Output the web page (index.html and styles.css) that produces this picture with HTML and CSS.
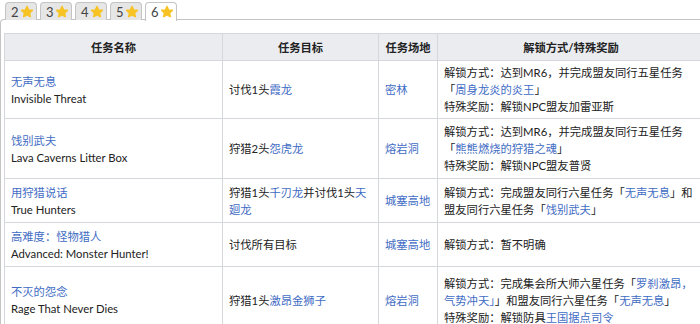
FILE: index.html
```html
<!DOCTYPE html>
<html lang="zh">
<head>
<meta charset="utf-8">
<link rel="stylesheet" href="styles.css">
</head>
<body>
<div class="tabs">
  <span class="tab">2<svg class="star" viewBox="0 0 20 20"><path d="M10 2.2 L12.3 7.1 L17.6 7.7 L13.6 11.3 L14.7 16.6 L10 13.9 L5.3 16.6 L6.4 11.3 L2.4 7.7 L7.7 7.1 Z" fill="#f7c325" stroke="#f7c325" stroke-width="2.2" stroke-linejoin="round"/></svg></span>
  <span class="tab">3<svg class="star" viewBox="0 0 20 20"><path d="M10 2.2 L12.3 7.1 L17.6 7.7 L13.6 11.3 L14.7 16.6 L10 13.9 L5.3 16.6 L6.4 11.3 L2.4 7.7 L7.7 7.1 Z" fill="#f7c325" stroke="#f7c325" stroke-width="2.2" stroke-linejoin="round"/></svg></span>
  <span class="tab">4<svg class="star" viewBox="0 0 20 20"><path d="M10 2.2 L12.3 7.1 L17.6 7.7 L13.6 11.3 L14.7 16.6 L10 13.9 L5.3 16.6 L6.4 11.3 L2.4 7.7 L7.7 7.1 Z" fill="#f7c325" stroke="#f7c325" stroke-width="2.2" stroke-linejoin="round"/></svg></span>
  <span class="tab">5<svg class="star" viewBox="0 0 20 20"><path d="M10 2.2 L12.3 7.1 L17.6 7.7 L13.6 11.3 L14.7 16.6 L10 13.9 L5.3 16.6 L6.4 11.3 L2.4 7.7 L7.7 7.1 Z" fill="#f7c325" stroke="#f7c325" stroke-width="2.2" stroke-linejoin="round"/></svg></span>
  <span class="tab active">6<svg class="star" viewBox="0 0 20 20"><path d="M10 2.2 L12.3 7.1 L17.6 7.7 L13.6 11.3 L14.7 16.6 L10 13.9 L5.3 16.6 L6.4 11.3 L2.4 7.7 L7.7 7.1 Z" fill="#f7c325" stroke="#f7c325" stroke-width="2.2" stroke-linejoin="round"/></svg></span>
</div>
<div class="panel">
  <table class="wikitable">
    <colgroup>
      <col class="c1"><col class="c2"><col class="c3"><col class="c4">
    </colgroup>
    <thead>
      <tr><th>任务名称</th><th>任务目标</th><th>任务场地</th><th>解锁方式/特殊奖励</th></tr>
    </thead>
    <tbody>
      <tr class="r1">
        <td><a>无声无息</a><br>Invisible Threat</td>
        <td>讨伐1头<a>霞龙</a></td>
        <td><a>密林</a></td>
        <td>解锁方式：达到MR6，并完成盟友同行五星任务<br>「<a>周身龙炎的炎王</a>」<br>特殊奖励：解锁NPC盟友加雷亚斯</td>
      </tr>
      <tr class="r2">
        <td><a>饯别武夫</a><br>Lava Caverns Litter Box</td>
        <td>狩猎2头<a>怨虎龙</a></td>
        <td><a>熔岩洞</a></td>
        <td>解锁方式：达到MR6，并完成盟友同行五星任务<br>「<a>熊熊燃烧的狩猎之魂</a>」<br>特殊奖励：解锁NPC盟友普贤</td>
      </tr>
      <tr class="r3">
        <td><a>用狩猎说话</a><br>True Hunters</td>
        <td>狩猎1头<a>千刃龙</a>并讨伐1头<a>天廻龙</a></td>
        <td><a>城塞高地</a></td>
        <td>解锁方式：完成盟友同行六星任务「<a>无声无息</a>」和盟友同行六星任务「<a>饯别武夫</a>」</td>
      </tr>
      <tr class="r4">
        <td><a>高难度：怪物猎人</a><br>Advanced: Monster Hunter!</td>
        <td>讨伐所有目标</td>
        <td><a>城塞高地</a></td>
        <td>解锁方式：暂不明确</td>
      </tr>
      <tr class="r5">
        <td><a>不灭的怨念</a><br>Rage That Never Dies</td>
        <td>狩猎1头<a>激昂金狮子</a></td>
        <td><a>熔岩洞</a></td>
        <td>解锁方式：完成集会所大师六星任务「<a>罗刹激昂，气势冲天」</a>」和盟友同行六星任务「<a>无声无息</a>」<br>特殊奖励：解锁防具<a>王国据点司令</a></td>
      </tr>
    </tbody>
  </table>
</div>
</body>
</html>
```

FILE: styles.css
```css
html, body {
  margin: 0;
  padding: 0;
  background: #ffffff;
}
body {
  font-family: Lato, "Noto Sans CJK SC", sans-serif;
  font-size: 11.3px;
  color: #222222;
  overflow: hidden;
}
.tabs {
  display: flex;
  gap: 3px;
  padding: 2px 0 0 5px;
  height: 18px;
  position: relative;
  z-index: 1;
}
.tab {
  display: flex;
  align-items: center;
  gap: 1px;
  box-sizing: border-box;
  width: 32px;
  height: 18px;
  padding: 0 0 0 5px;
  border: 1px solid #c4c4c4;
  border-bottom: none;
  border-radius: 4px 4px 0 0;
  background: #e6e6e6;
  color: #444444;
  font-size: 13px;
}
.tab.active {
  background: #ffffff;
  height: 19px;
}
.star {
  width: 14px;
  height: 14px;
}
.panel {
  border: 1px solid #c4c4c4;
  border-right: none;
  border-radius: 4px 0 0 0;
  padding: 13px 0 0 3px;
  margin-top: -1px;
}
.wikitable {
  border-collapse: collapse;
  table-layout: fixed;
  width: 700px;
  background: #ffffff;
  border: 1px solid #c8ccd1;
  line-height: 17px;
}
.c1 { width: 218px; }
.c2 { width: 156px; }
.c3 { width: 59px; }
.c4 { width: 267px; }
.wikitable th, .wikitable td {
  border: 1px solid #d4d7db;
  padding: 3px 6px;
}
.wikitable th {
  background: #eaecf0;
  font-weight: bold;
  text-align: center;
  height: 20px;
  color: #222222;
}
.wikitable td {
  vertical-align: middle;
  text-align: left;
}
.wikitable a {
  color: #3f6cc4;
}
.r1 td { height: 51px; }
.r2 td { height: 53px; }
.r3 td { height: 37px; }
.r4 td { height: 37px; }
.r5 td { height: 60px; }
```
